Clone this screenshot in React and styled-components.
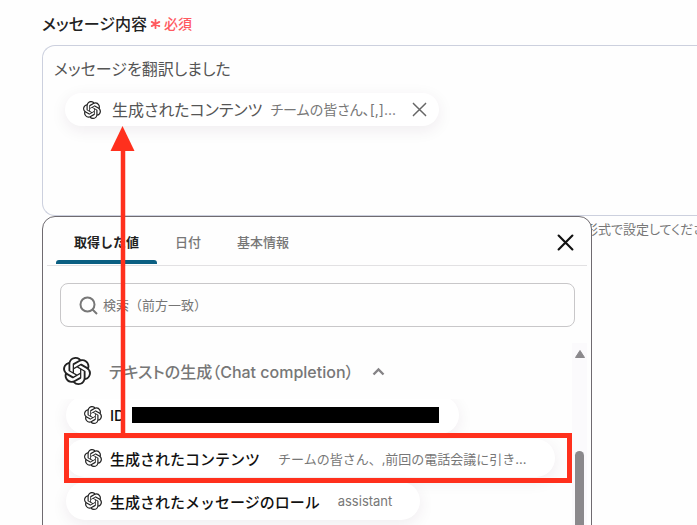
import React, { useState } from 'react';
import styled, { createGlobalStyle } from 'styled-components';
import { SiOpenai } from 'react-icons/si';

const GlobalStyle = createGlobalStyle`
  * {
    box-sizing: border-box;
  }
  body {
    margin: 0;
    background-color: #fefefe;
    color: #222;
    font-family: Inter, "Noto Sans CJK JP", sans-serif;
  }
  button, input {
    font-family: inherit;
  }
`;

const Page = styled.main`
  position: relative;
  height: 100vh;
  overflow: hidden;
  padding: 12px 0 0 42px;
`;

const Label = styled.div`
  display: flex;
  align-items: center;
  gap: 3px;
  height: 24px;
  margin-bottom: 9px;
  font-size: 16px;
  font-weight: 500;
  line-height: 24px;
  color: #222;
  font-feature-settings: "palt";
`;

const Required = styled.span`
  display: flex;
  align-items: center;
  gap: 3px;
  font-size: 14px;
  color: #ff5a5f;
`;

const Field = styled.div`
  position: relative;
`;

const Editor = styled.div`
  height: 171px;
  padding: 11px;
  border: 1px solid #ccd0de;
  border-right: none;
  border-radius: 13px 0 0 13px;
  outline: none;
  font-size: 16px;
  line-height: 24px;
  color: #555;
  font-feature-settings: "palt";
`;

const Chip = styled.div`
  display: flex;
  align-items: center;
  width: fit-content;
  height: 38px;
  padding: 0 28px 0 18px;
  border-radius: 19px;
  background-color: #fff;
  box-shadow: 0 4px 16px rgba(60, 30, 70, 0.08);
  white-space: nowrap;
  svg {
    flex: none;
  }
`;

const EditorChip = styled(Chip)`
  height: 33px;
  margin: 12px 0 0 11px;
  padding-right: 12px;
`;

const ChipName = styled.span`
  margin-left: ${(props) => (props.$strong ? '8px' : '11px')};
  font-size: ${(props) => (props.$strong ? '15px' : '16px')};
  font-weight: ${(props) => (props.$strong ? 500 : 400)};
  color: ${(props) => (props.$strong ? '#111' : '#555')};
`;

const ChipValue = styled.span`
  margin-left: ${(props) => (props.$strong ? '18px' : '8px')};
  font-size: ${(props) => (props.$strong ? '13px' : '14px')};
  color: #777;
`;

const Redacted = styled.span`
  width: 307px;
  height: 16px;
  margin: 0 -8px 0 7px;
  background-color: #000;
`;

const IconButton = styled.button`
  display: flex;
  padding: 0;
  border: none;
  background: none;
  color: ${(props) => props.$color};
  cursor: pointer;
`;

const ChipRemove = styled(IconButton)`
  margin-left: 16px;
`;

const Hint = styled.p`
  margin: 3px 0 0 543px;
  font-size: 13px;
  line-height: 20px;
  color: #777;
  white-space: nowrap;
  font-feature-settings: "palt";
`;

const Picker = styled.section`
  position: absolute;
  top: 100%;
  left: 0;
  width: 550px;
  height: 360px;
  padding: 0 4px;
  border: 1px solid #6f6b70;
  border-radius: 13px;
  background-color: #fefefe;
`;

const Tabs = styled.div`
  display: flex;
  align-items: stretch;
  height: 49px;
  padding: 0 13px 0 9px;
  border-bottom: 1px solid #e2e1e3;
`;

const Tab = styled.button`
  position: relative;
  padding: 0 18px;
  border: none;
  background: none;
  font-size: 13px;
  font-weight: ${(props) => (props.$active ? 700 : 500)};
  color: ${(props) => (props.$active ? '#222' : '#777')};
  cursor: pointer;
  &::after {
    content: "";
    display: ${(props) => (props.$active ? 'block' : 'none')};
    position: absolute;
    left: 0;
    right: 0;
    bottom: 1px;
    height: 4px;
    border-radius: 3px 3px 0 0;
    background-color: #0b5f82;
  }
`;

const CloseButton = styled(IconButton)`
  margin-left: auto;
  padding-top: 2px;
  align-self: center;
`;

const Search = styled.label`
  display: flex;
  align-items: center;
  gap: 5px;
  height: 44px;
  margin: 17px 12px 0 13px;
  padding: 0 18px;
  border: 1px solid #c8c7c9;
  border-radius: 8px;
  color: #777;
`;

const SearchInput = styled.input`
  flex: 1;
  min-width: 0;
  padding: 0;
  border: none;
  outline: none;
  background: none;
  font-size: 13px;
  &::placeholder {
    color: #757575;
    opacity: 1;
  }
`;

const Results = styled.div`
  display: flex;
  height: 220px;
  margin-top: 16px;
`;

const Group = styled.div`
  flex: 1;
  min-width: 0;
`;

const GroupHeader = styled.button`
  display: flex;
  align-items: center;
  width: 100%;
  height: 56px;
  padding: 0 16px;
  border: none;
  background: none;
  font-size: 16px;
  font-weight: 500;
  color: #777;
  text-align: left;
  cursor: pointer;
`;

const GroupTitle = styled.span`
  margin: 0 18px;
  font-feature-settings: "palt";
`;

const Items = styled.ul`
  display: flex;
  flex-direction: column;
  gap: 5px;
  height: 160px;
  margin: 0;
  padding: 0 0 0 19px;
  overflow: hidden;
  list-style: none;
  li:first-child {
    margin-top: -3px;
  }
`;

const Scrollbar = styled.div`
  display: flex;
  flex-direction: column;
  align-items: center;
  width: 15px;
  padding-top: 7px;
  background-color: #fbfafc;
`;

const Thumb = styled.div`
  flex: 1;
  width: 9px;
  margin-top: 93px;
  border-radius: 5px;
  background-color: #8b898c;
`;

// Callout marks drawn over the screen
const Highlight = styled.div`
  position: absolute;
  top: 433px;
  left: 64px;
  width: 508px;
  height: 50px;
  border: 5px solid #ff301d;
  pointer-events: none;
`;

const Arrow = styled.svg`
  position: absolute;
  top: 126px;
  left: 110px;
  pointer-events: none;
`;

const Cross = ({ size, stroke }) => (
  <svg width={size} height={size} viewBox="0 0 16 16" fill="none">
    <path d="M1.5 1.5 14.5 14.5M14.5 1.5 1.5 14.5" stroke="currentColor" strokeWidth={stroke} strokeLinecap="round" />
  </svg>
);

const tabs = ['取得した値', '日付', '基本情報'];

const items = [
  { name: 'ID', redacted: true },
  { name: '生成されたコンテンツ', value: 'チームの皆さん、,前回の電話会議に引き...' },
  { name: '生成されたメッセージのロール', value: 'assistant' },
];

const App = () => {
  const [active, setActive] = useState(tabs[0]);

  return (
    <Page>
      <GlobalStyle />
      <Label>
        <span id="message-label">メッセージ内容</span>
        <Required>
          <svg width="11" height="10" viewBox="0 0 10 10" stroke="currentColor" strokeWidth="1.8" strokeLinecap="round">
            <path d="M5 .8V9.2M1.2 2.9 8.8 7.1M8.8 2.9 1.2 7.1" />
          </svg>
          必須
        </Required>
      </Label>
      <Field>
        <Editor role="textbox" aria-multiline="true" aria-labelledby="message-label" tabIndex={0}>
          メッセージを翻訳しました
          <EditorChip>
            <SiOpenai size={18} color="#222" />
            <ChipName>生成されたコンテンツ</ChipName>
            <ChipValue>チームの皆さん、[,]...</ChipValue>
            <ChipRemove $color="#666" aria-label="削除">
              <Cross size={15} stroke={1.6} />
            </ChipRemove>
          </EditorChip>
        </Editor>

        <Picker>
          <Tabs role="tablist">
            {tabs.map((tab) => (
              <Tab key={tab} role="tab" aria-selected={tab === active} $active={tab === active} onClick={() => setActive(tab)}>
                {tab}
              </Tab>
            ))}
            <CloseButton $color="#111" aria-label="閉じる">
              <Cross size={17} stroke={2} />
            </CloseButton>
          </Tabs>
          <Search>
            <svg width="19" height="19" viewBox="0 0 19 19" fill="none" stroke="currentColor" strokeWidth="2">
              <circle cx="8.5" cy="8.5" r="7" />
              <path d="M13.5 13.5 18 18" />
            </svg>
            <SearchInput type="text" aria-label="検索" placeholder="検索（前方一致）" />
          </Search>
          <Results>
            <Group>
              <GroupHeader aria-expanded="true">
                <SiOpenai size={28} color="#222" />
                <GroupTitle>テキストの生成（Chat completion）</GroupTitle>
                <svg width="13" height="9" viewBox="0 0 13 9" fill="none">
                  <path d="M1.5 7.5 6.5 2.5 11.5 7.5" stroke="#858386" strokeWidth="2.4" />
                </svg>
              </GroupHeader>
              <Items>
                {items.map((item) => (
                  <li key={item.name}>
                    <Chip>
                      <SiOpenai size={18} color="#222" />
                      <ChipName $strong>{item.name}</ChipName>
                      {item.redacted && <Redacted />}
                      {item.value && <ChipValue $strong>{item.value}</ChipValue>}
                    </Chip>
                  </li>
                ))}
              </Items>
            </Group>
            <Scrollbar>
              <svg width="10" height="8" viewBox="0 0 10 8">
                <path d="M5 0.5 9.5 7.5H.5Z" fill="#8b898c" stroke="#8b898c" strokeLinejoin="round" />
              </svg>
              <Thumb />
            </Scrollbar>
          </Results>
        </Picker>
      </Field>
      <Hint>形式で設定してください</Hint>

      <Highlight />
      <Arrow width="25" height="310" viewBox="0 0 25 310">
        <path d="M12.5 0 24.5 25H.5Z" fill="#ff301d" />
        <path d="M13 22V310" stroke="#ff301d" strokeWidth="4.5" />
      </Arrow>
    </Page>
  );
};

export default App;
